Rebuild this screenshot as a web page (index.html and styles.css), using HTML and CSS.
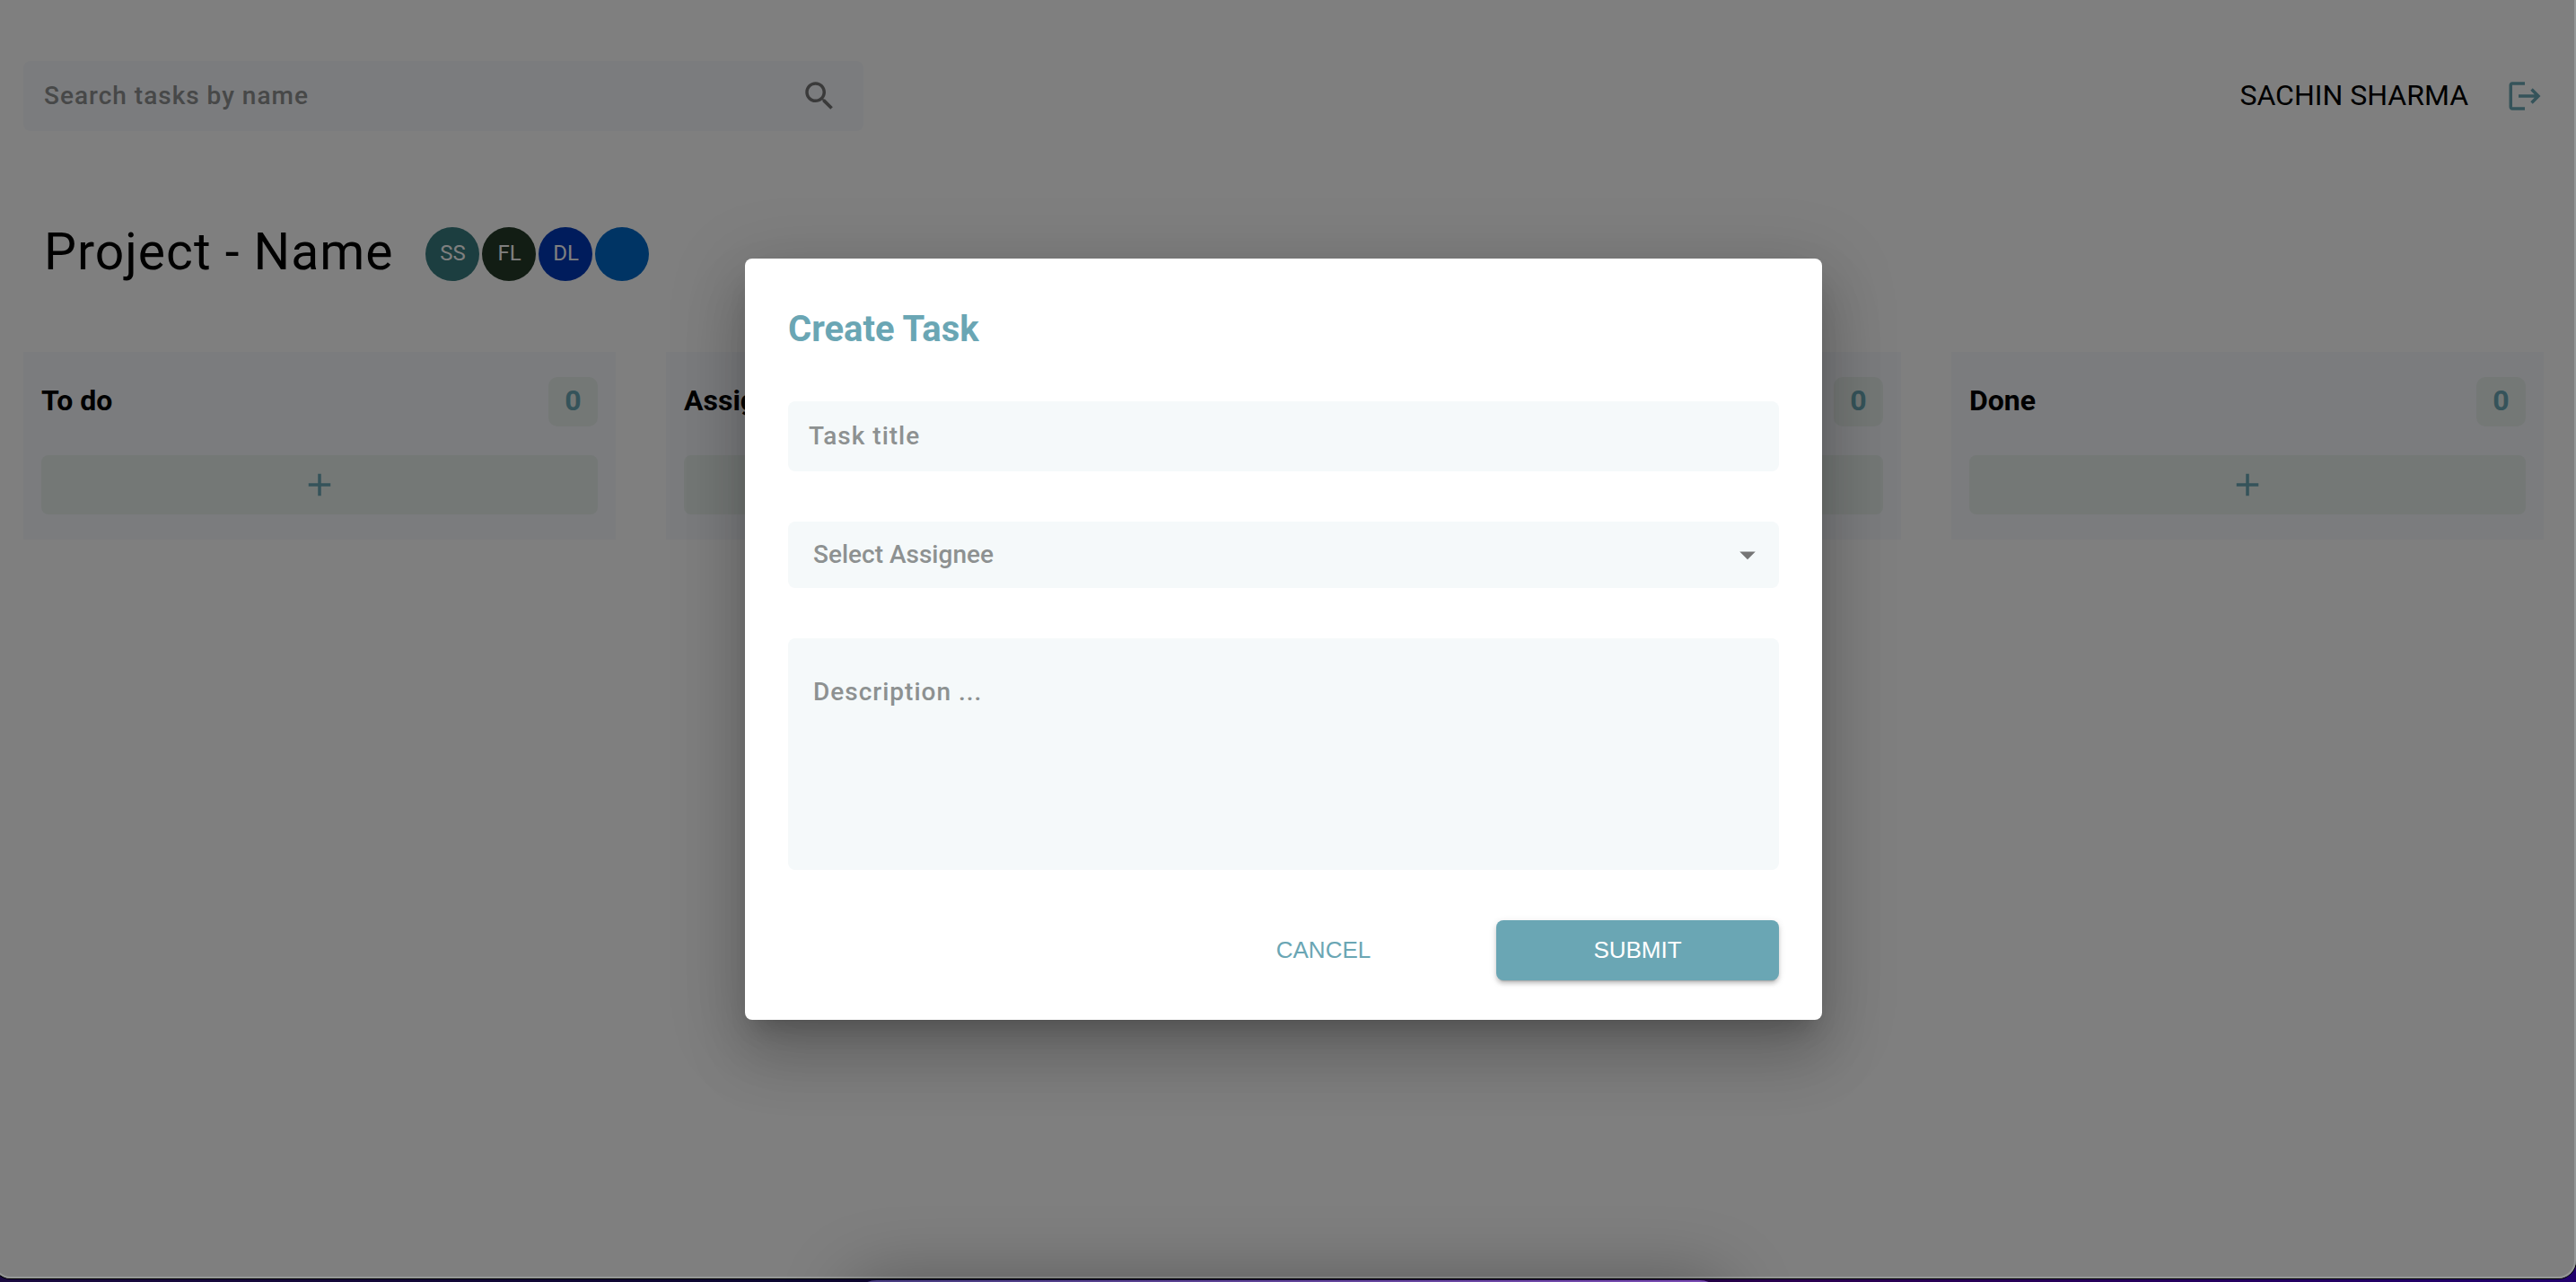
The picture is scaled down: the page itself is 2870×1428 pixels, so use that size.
FILE: index.html
```html
<!DOCTYPE html>
<html lang="en">
<head>
<meta charset="utf-8">
<meta name="viewport" content="width=device-width, initial-scale=1">
<title>Project board</title>
<link rel="stylesheet" href="styles.css">
</head>
<body>
<div class="window">
  <header class="topbar">
    <form class="search" role="search">
      <input class="search-input" type="search" placeholder="Search tasks by name" aria-label="Search tasks by name">
      <button class="icon-button" type="submit" aria-label="Search">
        <svg class="icon" viewBox="0 0 24 24"><path d="M15.5 14h-.79l-.28-.27C15.41 12.59 16 11.11 16 9.5 16 5.91 13.09 3 9.5 3S3 5.91 3 9.5 5.91 16 9.5 16c1.61 0 3.09-.59 4.23-1.57l.27.28v.79l5 4.99L20.49 19l-4.99-5zm-6 0C7.01 14 5 11.99 5 9.5S7.01 5 9.5 5 14 7.01 14 9.5 11.99 14 9.5 14z"/></svg>
      </button>
    </form>
    <div class="account">
      <span class="account-name">SACHIN SHARMA</span>
      <button class="icon-button teal" type="button" aria-label="Log out">
        <svg class="icon" viewBox="0 0 24 24"><path d="m17 7-1.41 1.41L18.17 11H8v2h10.17l-2.58 2.58L17 17l5-5zM4 5h8V3H4c-1.1 0-2 .9-2 2v14c0 1.1.9 2 2 2h8v-2H4z"/></svg>
      </button>
    </div>
  </header>

  <main>
    <div class="project">
      <h1 class="project-name">Project - Name</h1>
      <div class="avatars">
        <span class="avatar avatar-ss">SS</span>
        <span class="avatar avatar-fl">FL</span>
        <span class="avatar avatar-dl">DL</span>
        <span class="avatar avatar-blank"></span>
      </div>
    </div>

    <div class="board">
      <section class="column">
        <div class="column-head"><h2 class="column-name">To do</h2><span class="count">0</span></div>
        <button class="add" type="button" aria-label="Add task to To do"><svg class="icon" viewBox="0 0 24 24"><path d="M19 13h-6v6h-2v-6H5v-2h6V5h2v6h6v2z"/></svg></button>
      </section>
      <section class="column">
        <div class="column-head"><h2 class="column-name">Assigned</h2><span class="count">0</span></div>
        <button class="add" type="button" aria-label="Add task to Assigned"><svg class="icon" viewBox="0 0 24 24"><path d="M19 13h-6v6h-2v-6H5v-2h6V5h2v6h6v2z"/></svg></button>
      </section>
      <section class="column">
        <div class="column-head"><h2 class="column-name"></h2><span class="count">0</span></div>
        <button class="add" type="button" aria-label="Add task"><svg class="icon" viewBox="0 0 24 24"><path d="M19 13h-6v6h-2v-6H5v-2h6V5h2v6h6v2z"/></svg></button>
      </section>
      <section class="column">
        <div class="column-head"><h2 class="column-name">Done</h2><span class="count">0</span></div>
        <button class="add" type="button" aria-label="Add task to Done"><svg class="icon" viewBox="0 0 24 24"><path d="M19 13h-6v6h-2v-6H5v-2h6V5h2v6h6v2z"/></svg></button>
      </section>
    </div>
  </main>

  <div class="backdrop">
    <form class="dialog" role="dialog" aria-labelledby="dialog-title">
      <h2 class="dialog-title" id="dialog-title">Create Task</h2>
      <input class="field field-title" type="text" placeholder="Task title" aria-label="Task title">
      <div class="select-wrap">
        <select class="field field-select" aria-label="Select Assignee">
          <option>Select Assignee</option>
        </select>
        <svg class="icon select-arrow" viewBox="0 0 24 24"><path d="m7 10 5 5 5-5z"/></svg>
      </div>
      <textarea class="field field-text" placeholder="Description ..." aria-label="Description"></textarea>
      <div class="actions">
        <button class="action" type="button">CANCEL</button>
        <button class="action action-primary" type="submit">SUBMIT</button>
      </div>
    </form>
  </div>
</div>
<div class="dock"></div>
</body>
</html>
```

FILE: styles.css
```css
* {
  box-sizing: border-box;
}

body {
  margin: 0;
  min-height: 100vh;
  overflow: hidden;
  background: linear-gradient(90deg, #1a0a40, #0c0630 30%, #2a0050 70%, #20006c);
  font-family: Roboto, "Liberation Sans", sans-serif;
  color: #000;
}

h1, h2 {
  margin: 0;
}

button {
  border: 0;
  padding: 0;
  background: none;
  font: inherit;
  cursor: pointer;
}

.icon {
  display: block;
  width: 42px;
  height: 42px;
  fill: currentColor;
}

/* App window: its left corner runs just past the screen edge */
.window {
  position: relative;
  min-height: calc(100vh - 4px);
  margin: 0 0 0 -8px;
  padding: 68px 36px 68px 34px;
  overflow: hidden;
  border-radius: 0 0 20px 20px;
  background: #fff;
  box-shadow: 0 0 0 1px #000;
}

.topbar {
  display: flex;
  justify-content: space-between;
  align-items: center;
}

.search {
  display: flex;
  align-items: center;
  width: 936px;
  height: 78px;
  padding: 0 28px 0 23px;
  border-radius: 8px;
  background: #f6f8fc;
}

.search-input {
  flex: 1;
  border: 0;
  padding: 0;
  outline: 0;
  background: none;
  font: 500 28px/32px Roboto, sans-serif;
  letter-spacing: 1px;
}

.search-input::placeholder {
  color: #8e9090;
}

.icon-button {
  color: #757575;
}

.account {
  display: flex;
  align-items: center;
  gap: 42px;
}

.account-name {
  padding-bottom: 2px;
  font-size: 32px;
  line-height: 38px;
}

.teal {
  color: #6aa6b4;
}

.project {
  display: flex;
  align-items: center;
  gap: 36px;
  margin: 101px 0 73px;
  padding-left: 23px;
}

.project-name {
  padding-bottom: 4px;
  font-size: 57px;
  font-weight: 400;
  line-height: 68px;
  letter-spacing: 1px;
}

.avatars {
  display: flex;
  gap: 3px;
}

.avatar {
  display: flex;
  justify-content: center;
  align-items: center;
  width: 60px;
  height: 60px;
  padding-bottom: 2px;
  border-radius: 50%;
  color: #fff;
  font-size: 24px;
}

.avatar-ss { background: #387c80; }
.avatar-fl { background: #243a28; }
.avatar-dl { background: #0038b8; }
.avatar-blank { background: #0068c8; }

.board {
  display: grid;
  grid-template-columns: repeat(4, 1fr);
  gap: 56px;
}

.column {
  padding: 28px 20px;
  background: #f6f8fc;
}

.column-head {
  display: flex;
  justify-content: space-between;
  align-items: center;
  margin-bottom: 32px;
}

.column-name {
  padding-bottom: 4px;
  font-size: 32px;
  font-weight: 700;
  line-height: 38px;
}

.count {
  display: flex;
  justify-content: center;
  align-items: center;
  width: 55px;
  height: 55px;
  padding-bottom: 4px;
  border-radius: 10px;
  background: #e8f0ec;
  color: #6aa6b4;
  font-size: 32px;
  font-weight: 700;
}

.add {
  display: flex;
  justify-content: center;
  align-items: center;
  width: 100%;
  height: 66px;
  border-radius: 8px;
  background: #e8f0ec;
  color: #6aa6b4;
}

.backdrop {
  position: absolute;
  inset: 0;
  display: flex;
  justify-content: center;
  align-items: center;
  padding-right: 2px;
  background: rgba(0, 0, 0, 0.5);
}

/* Light rim along the window edge */
.window::after {
  content: "";
  position: absolute;
  inset: 0;
  border: solid #959797;
  border-width: 0 2px 2px;
  border-radius: 0 0 20px 20px;
  pointer-events: none;
}

.dialog {
  display: flex;
  flex-direction: column;
  gap: 56px;
  width: 1200px;
  max-width: 90%;
  padding: 54px 48px 44px;
  border-radius: 8px;
  background: #fff;
  box-shadow:
    0 19px 26px -12px rgba(0, 0, 0, 0.2),
    0 42px 66px 5px rgba(0, 0, 0, 0.14),
    0 16px 80px 14px rgba(0, 0, 0, 0.12);
}

.dialog-title {
  color: #6aa6b4;
  font-size: 40px;
  font-weight: 700;
  line-height: 49px;
}

.field {
  display: block;
  width: 100%;
  border: 0;
  border-radius: 8px;
  outline: 0;
  background: #f5f9fa;
  color: #8d9191;
  font: 500 28px/32px Roboto, sans-serif;
}

.field::placeholder {
  color: #8d9191;
}

.field-title {
  height: 78px;
  padding: 0 23px 2px;
  letter-spacing: 1px;
}

.select-wrap {
  position: relative;
}

.field-select {
  appearance: none;
  height: 74px;
  padding: 0 64px 0 28px;
}

.select-arrow {
  position: absolute;
  top: 16px;
  right: 14px;
  color: #757575;
  pointer-events: none;
}

.field-text {
  height: 258px;
  padding: 44px 28px;
  letter-spacing: 1px;
  resize: none;
}

.actions {
  display: flex;
  justify-content: flex-end;
  gap: 35px;
}

.action {
  width: 315px;
  height: 67px;
  padding-bottom: 2px;
  border-radius: 8px;
  color: #6aa6b4;
  font: 400 26px/32px "Liberation Sans", Arial, sans-serif;
}

.action-primary {
  background: #6aa6b4;
  color: #fff;
  box-shadow:
    0 5px 2px -4px rgba(0, 0, 0, 0.2),
    0 4px 4px rgba(0, 0, 0, 0.14),
    0 2px 9px rgba(0, 0, 0, 0.12);
}

/* Top edge of the dock, mostly below the screen */
.dock {
  position: fixed;
  right: 33%;
  bottom: -78px;
  left: 33%;
  height: 80px;
  border-radius: 30px;
  background: linear-gradient(90deg, #483e80, #7a4cb4);
  box-shadow: 0 0 80px rgba(0, 0, 0, 0.3);
}
```
